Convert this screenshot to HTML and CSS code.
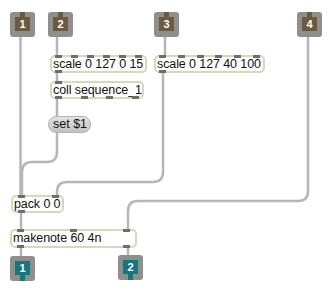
FILE: index.html
```html
<!DOCTYPE html>
<html lang="en">
<head>
    <meta charset="UTF-8">
    <title>Patcher</title>
    <link rel="stylesheet" href="styles.css">
</head>
<body>
    <div class="patcher">
        <svg class="wires" width="332" height="293" viewBox="0 0 332 293">
            <g fill="none" stroke="#b6b6b6" stroke-width="2.5">
                <path d="M20.5 36 V196"/>
                <path d="M57 36 V56"/>
                <path d="M165 36 V56"/>
                <path d="M57 73 V82"/>
                <path d="M57 99 V117"/>
                <path d="M57 133 V152 Q57 162 47 162 H32 Q22 162 22 172 V196"/>
                <path d="M163 73 V172 Q163 182 153 182 H67 Q57 182 57 192 V196"/>
                <path d="M308 37 V191 Q308 201 298 201 H138 Q128 201 128 211 V230"/>
                <path d="M21 213 V230"/>
                <path d="M21 248 V257"/>
                <path d="M128 248 V256"/>
            </g>
        </svg>

        <div class="inlet in1"><span class="num">1</span></div>
        <div class="inlet in2"><span class="num">2</span></div>
        <div class="inlet in3"><span class="num">3</span></div>
        <div class="inlet in4"><span class="num">4</span></div>

        <div class="obj scale1">
            <div class="ports top"><i></i><i></i><i></i><i></i><i></i><i></i></div>
            scale 0 127 0 15
            <div class="ports bottom"><i></i></div>
        </div>
        <div class="obj coll">
            <div class="ports top"><i></i></div>
            coll sequence_1
            <div class="ports bottom"><i></i><i></i><i></i><i></i></div>
        </div>
        <div class="msg setmsg">set $1</div>
        <div class="obj scale2">
            <div class="ports top"><i></i><i></i><i></i><i></i><i></i><i></i></div>
            scale 0 127 40 100
            <div class="ports bottom"><i></i></div>
        </div>
        <div class="obj pack">
            <div class="ports top"><i></i><i></i></div>
            pack 0 0
            <div class="ports bottom"><i></i></div>
        </div>
        <div class="obj makenote">
            <div class="ports top"><i></i><i></i><i></i></div>
            makenote 60 4n
            <div class="ports bottom"><i></i><i></i></div>
        </div>

        <div class="outlet out1"><span class="num">1</span></div>
        <div class="outlet out2"><span class="num">2</span></div>
    </div>
</body>
</html>
```

FILE: styles.css
```css
body {
    margin: 0;
    background: #fff;
    font-family: "Liberation Sans", Arial, sans-serif;
}
.patcher {
    position: relative;
    width: 332px;
    height: 293px;
    overflow: hidden;
}
.wires {
    position: absolute;
    left: 0;
    top: 0;
}

/* inlets / outlets */
.inlet, .outlet {
    position: absolute;
    width: 25px;
    height: 25px;
    background: #8f8f8c;
    border-radius: 3px;
}
.num {
    position: absolute;
    left: 5px;
    top: 5px;
    width: 15px;
    height: 14px;
    color: #fff;
    font-size: 11px;
    font-weight: bold;
    line-height: 15px;
    text-align: center;
}
.inlet .num { background: #6b5a40; }
.outlet .num { background: #15767d; }
.inlet .num::before, .outlet .num::after {
    content: "";
    position: absolute;
    left: 5px;
    width: 5px;
    height: 5px;
}
.inlet .num::before { top: -5px; background: #6b5a40; }
.outlet .num::after { bottom: -6px; height: 6px; background: #15767d; }

.in1 { left: 10px; top: 12px; }
.in2 { left: 48px; top: 12px; }
.in3 { left: 154px; top: 12px; }
.in4 { left: 297px; top: 12px; }
.out1 { left: 10px; top: 256px; }
.out2 { left: 118px; top: 255px; }

/* object boxes */
.obj {
    position: absolute;
    box-sizing: border-box;
    height: 18px;
    padding-left: 1px;
    border: 2px solid #d3d9bd;
    border-radius: 5px;
    background: #fff;
    color: #111;
    font-size: 12.5px;
    line-height: 14px;
    letter-spacing: -0.1px;
    white-space: nowrap;
}
.ports {
    position: absolute;
    left: 3px;
    right: 3px;
    display: flex;
    justify-content: space-between;
}
.ports.top { top: -2px; }
.ports.bottom { bottom: -2px; }
.ports i {
    display: block;
    width: 7px;
    height: 3px;
    background: #6d6d6d;
}
.scale1 { left: 50px; top: 55px; width: 97px; }
.coll { left: 50px; top: 81px; width: 94px; }
.scale2 { left: 154px; top: 55px; width: 111px; }
.pack { left: 11px; top: 195px; width: 53px; }
.makenote { left: 10px; top: 229px; width: 127px; height: 19px; line-height: 15px; }
.pack .ports { left: 5px; }
.makenote .ports { left: 5px; right: 5px; }

/* message box */
.msg {
    position: absolute;
    box-sizing: border-box;
    height: 17px;
    padding: 0 4px;
    border: 1px solid #b4b4b4;
    border-radius: 8px;
    background: linear-gradient(#e2e2e2, #c2c2c2);
    color: #111;
    font-size: 12.5px;
    line-height: 15px;
    white-space: nowrap;
}
.setmsg { left: 48px; top: 116px; width: 43px; }
```
